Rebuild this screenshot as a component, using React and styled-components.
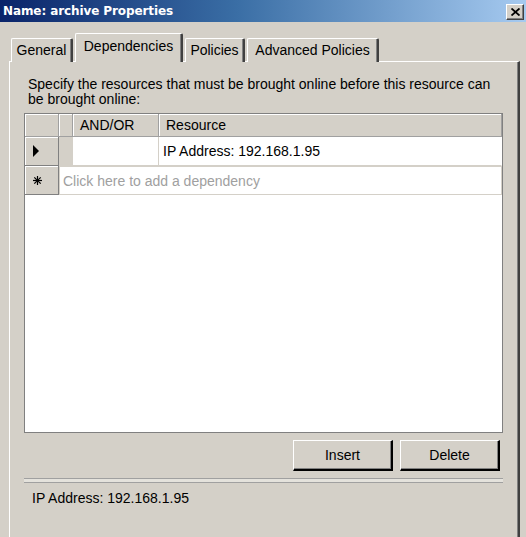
import React from "react";
import styled, { createGlobalStyle } from "styled-components";

const GlobalStyle = createGlobalStyle`
  html, body {
    margin: 0;
    padding: 0;
    background: #d4d0c8;
    overflow: hidden;
  }
  * { box-sizing: border-box; }
`;

const Window = styled.div`
  width: 526px;
  height: 537px;
  background: #d4d0c8;
  font-family: "Liberation Sans", Arial, sans-serif;
  font-size: 14px;
  color: #000;
  display: flex;
  flex-direction: column;
  overflow: hidden;
`;

const TitleBar = styled.div`
  height: 22px;
  flex: none;
  display: flex;
  align-items: center;
  justify-content: space-between;
  padding: 0 2px 0 3px;
  background: linear-gradient(to right, #0a246a 0%, #3a6ea5 45%, #a6caf0 100%);
`;

const Title = styled.span`
  font-family: "DejaVu Sans", Verdana, sans-serif;
  font-weight: bold;
  font-size: 12px;
  color: #fff;
  letter-spacing: -0.1px;
`;

const CloseButton = styled.div`
  width: 18px;
  height: 16px;
  margin-top: 1px;
  background: #d4d0c8;
  border-top: 1px solid #fff;
  border-left: 1px solid #fff;
  border-right: 1px solid #404040;
  border-bottom: 1px solid #404040;
  box-shadow: inset -1px -1px 0 #808080;
  display: flex;
  align-items: center;
  justify-content: center;
`;

const Body = styled.div`
  flex: 1;
  display: flex;
  flex-direction: column;
  padding: 11px 6px 0 9px;
  min-height: 0;
`;

const TabStrip = styled.div`
  display: flex;
  align-items: flex-end;
  gap: 2px;
  padding-left: 2px;
  position: relative;
  z-index: 1;
  margin-bottom: -1px;
`;

const Tab = styled.div`
  width: ${(p) => p.$width}px;
  height: ${(p) => (p.$active ? 29 : 24)}px;
  padding-bottom: ${(p) => (p.$active ? 5 : 1)}px;
  background: #d4d0c8;
  border-top: 1px solid #fff;
  border-left: 1px solid #fff;
  border-right: 2px solid #404040;
  border-top-left-radius: 2px;
  border-top-right-radius: 2px;
  box-shadow: inset -1px 0 0 #808080;
  display: flex;
  align-items: center;
  justify-content: center;
  white-space: nowrap;
`;

const Panel = styled.div`
  flex: 1;
  display: flex;
  flex-direction: column;
  padding: 15px 15px 0 14px;
  border-top: 1px solid #fff;
  border-left: 1px solid #fff;
  border-right: 2px solid #404040;
  box-shadow: inset -1px 0 0 #808080;
`;

const Intro = styled.p`
  margin: 0;
  line-height: 15px;
  padding-left: 4px;
`;

const DataGrid = styled.div`
  margin-top: 6px;
  height: 320px;
  border: 1px solid #808080;
  background: #fff;
  display: grid;
  grid-template-columns: 34px 14px 86px 1fr;
  grid-template-rows: 23px 29px 29px 1fr;
`;

const HeaderCell = styled.div`
  background: #d4d0c8;
  border-right: 1px solid #a0a0a0;
  border-bottom: 1px solid #a0a0a0;
  box-shadow: inset 1px 1px 0 #fff;
  display: flex;
  align-items: center;
  padding-left: 7px;
  &:last-of-type { border-right: none; }
`;

const RowHeader = styled.div`
  background: #d4d0c8;
  border-right: 1px solid #808080;
  border-bottom: 1px solid #808080;
  box-shadow: inset 1px 1px 0 #fff;
  display: flex;
  align-items: center;
  padding-left: 8px;
`;

const Cell = styled.div`
  background: ${(p) => (p.$shaded ? "#d4d0c8" : "#fff")};
  border-right: 1px solid ${(p) => (p.$last ? "transparent" : "#d4d0c8")};
  border-bottom: 1px solid #d4d0c8;
  display: flex;
  align-items: center;
  padding-left: 4px;
`;

const NewRowCell = styled.div`
  grid-column: 2 / 5;
  border: 1px solid #d4d0c8;
  display: flex;
  align-items: center;
  padding-left: 3px;
  color: #a0a0a0;
`;

const Filler = styled.div`
  grid-column: 1 / 5;
`;

const ButtonRow = styled.div`
  display: flex;
  justify-content: flex-end;
  gap: 7px;
  margin-top: 7px;
  padding-right: 3px;
`;

const Button = styled.div`
  width: 100px;
  height: 31px;
  background: #d4d0c8;
  border-top: 1px solid #fff;
  border-left: 1px solid #fff;
  border-right: 2px solid #000;
  border-bottom: 2px solid #000;
  box-shadow: inset -1px -1px 0 #808080;
  display: flex;
  align-items: center;
  justify-content: center;
`;

const Separator = styled.div`
  margin-top: 7px;
  height: 5px;
  border-top: 1px solid #a0a0a0;
  border-bottom: 1px solid #a0a0a0;
  background: #e4e2dc;
`;

const Status = styled.div`
  margin-top: 8px;
  padding-left: 8px;
  line-height: 15px;
`;

function RowArrow() {
  return (
    <svg width="7" height="12" viewBox="0 0 7 12">
      <polygon points="0,0 6,6 0,12" fill="#000" />
    </svg>
  );
}

function NewRowStar() {
  return (
    <svg width="9" height="9" viewBox="0 0 9 9" stroke="#000" strokeWidth="1.2">
      <line x1="4.5" y1="0" x2="4.5" y2="9" />
      <line x1="0" y1="4.5" x2="9" y2="4.5" />
      <line x1="1.3" y1="1.3" x2="7.7" y2="7.7" />
      <line x1="7.7" y1="1.3" x2="1.3" y2="7.7" />
    </svg>
  );
}

function CloseGlyph() {
  return (
    <svg width="9" height="8" viewBox="0 0 9 8" stroke="#000" strokeWidth="1.8">
      <line x1="0.5" y1="0.5" x2="8.5" y2="7.5" />
      <line x1="8.5" y1="0.5" x2="0.5" y2="7.5" />
    </svg>
  );
}

const tabs = [
  { label: "General", width: 62 },
  { label: "Dependencies", width: 108, active: true },
  { label: "Policies", width: 60 },
  { label: "Advanced Policies", width: 132 },
];

export default function App() {
  return (
    <Window>
      <GlobalStyle />
      <TitleBar>
        <Title>Name: archive Properties</Title>
        <CloseButton>
          <CloseGlyph />
        </CloseButton>
      </TitleBar>
      <Body>
        <TabStrip>
          {tabs.map((t) => (
            <Tab key={t.label} $width={t.width} $active={t.active}>
              {t.label}
            </Tab>
          ))}
        </TabStrip>
        <Panel>
          <Intro>
            Specify the resources that must be brought online before this resource can
            be brought online:
          </Intro>
          <DataGrid>
            <HeaderCell />
            <HeaderCell />
            <HeaderCell>AND/OR</HeaderCell>
            <HeaderCell>Resource</HeaderCell>

            <RowHeader>
              <RowArrow />
            </RowHeader>
            <Cell $shaded />
            <Cell />
            <Cell $last>IP Address: 192.168.1.95</Cell>

            <RowHeader>
              <NewRowStar />
            </RowHeader>
            <NewRowCell>Click here to add a dependency</NewRowCell>

            <Filler />
          </DataGrid>
          <ButtonRow>
            <Button>Insert</Button>
            <Button>Delete</Button>
          </ButtonRow>
          <Separator />
          <Status>IP Address: 192.168.1.95</Status>
        </Panel>
      </Body>
    </Window>
  );
}
